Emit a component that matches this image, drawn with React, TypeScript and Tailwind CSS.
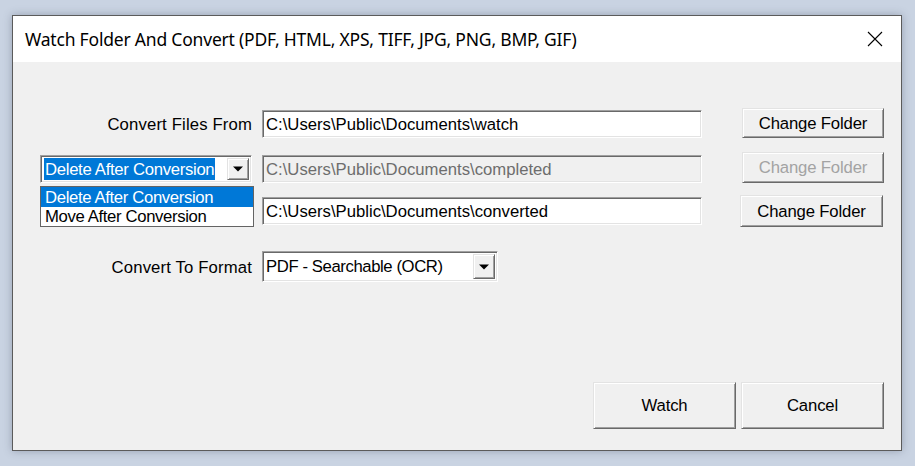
import React from "react";

const sunken =
  "border border-t-[#a0a0a0] border-l-[#a0a0a0] border-b-white border-r-white shadow-[inset_1px_1px_0_#696969,inset_-1px_-1px_0_#e3e3e3]";
const raised =
  "border border-t-[#e3e3e3] border-l-[#e3e3e3] border-b-[#696969] border-r-[#696969] shadow-[inset_1px_1px_0_#ffffff,inset_-1px_-1px_0_#a0a0a0] bg-[#f0f0f0]";

function Arrow() {
  return (
    <div className={`${raised} w-[22px] h-full flex items-center justify-center shrink-0`}>
      <svg width="10" height="6" viewBox="0 0 10 6">
        <path d="M0 0.5 L10 0.5 L5 5.5 Z" fill="#000" />
      </svg>
    </div>
  );
}

function TextBox({ value, disabled }: { value: string; disabled?: boolean }) {
  return (
    <div
      className={`${sunken} ml-[10px] w-[440px] h-[28px] flex items-center pl-[3px] pt-[3px] ${
        disabled ? "bg-[#f0f0f0] text-[#6d6d6d]" : "bg-white text-black"
      }`}
    >
      {value}
    </div>
  );
}

function Btn({ label, disabled, className = "" }: { label: string; disabled?: boolean; className?: string }) {
  return (
    <div
      className={`${raised} flex items-center justify-center pt-[2px] tracking-[-0.15px] ${
        disabled ? "text-[#a3a3a3]" : "text-black"
      } ${className}`}
    >
      {label}
    </div>
  );
}

export default function App() {
  return (
    <div
      className="w-[915px] h-[466px] bg-[#c9d3e2] pt-[15px] pl-[12px] overflow-hidden"
      style={{ fontFamily: '"Liberation Sans", Arial, sans-serif' }}
    >
      <div className="w-[890px] h-[436px] border border-[#5b5b5b] bg-[#f0f0f0] flex flex-col shadow-[0_0_8px_rgba(60,70,90,0.35)]">
        <div className="h-[46px] bg-white flex items-center justify-between pl-[12px] pr-[18px] shrink-0">
          <span
            className="text-[17.5px] text-black tracking-[-0.2px]"
            style={{ fontFamily: '"Noto Sans", "Open Sans", sans-serif' }}
          >
            Watch Folder And Convert (PDF, HTML, XPS, TIFF, JPG, PNG, BMP, GIF)
          </span>
          <svg width="16" height="16" viewBox="0 0 16 16">
            <path d="M1 1 L15 15 M15 1 L1 15" stroke="#000" strokeWidth="1.1" />
          </svg>
        </div>
        <div className="relative flex-1 text-[16.7px] leading-none">
          {/* Row 1 */}
          <div className="mt-[46px] h-[30px] flex items-end">
            <div className="w-[239px] h-[28px] flex items-center justify-end pt-[3px] tracking-[0.15px]">
              Convert Files From
            </div>
            <TextBox value="C:\Users\Public\Documents\watch" />
            <Btn label="Change Folder" className="ml-[40px] w-[142px] h-[30px]" />
          </div>
          {/* Row 2 */}
          <div className="mt-[14px] h-[31px] flex items-end">
            <div className="w-[239px] pl-[27px] h-[28px]">
              <div className={`${sunken} bg-white h-[28px] w-[212px] flex items-center pl-[3px] pr-[2px] py-[2px]`}>
                <div className="flex-1 h-full flex items-center">
                  <span className="bg-[#0078d7] text-white h-[22px] flex items-center pl-[1px] pr-[1px] pt-[2px] tracking-[-0.3px]">
                    Delete After Conversion
                  </span>
                </div>
                <Arrow />
              </div>
            </div>
            <TextBox value="C:\Users\Public\Documents\completed" disabled />
            <Btn label="Change Folder" disabled className="ml-[40px] w-[142px] h-[31px]" />
          </div>
          {/* Row 3 */}
          <div className="mt-[12px] h-[32px] flex items-center">
            <div className="w-[239px]" />
            <TextBox value="C:\Users\Public\Documents\converted" />
            <Btn label="Change Folder" className="ml-[38px] w-[143px] h-[32px]" />
          </div>
          {/* Row 4 */}
          <div className="mt-[24px] h-[31px] flex items-center">
            <div className="w-[239px] flex justify-end pt-[3px] tracking-[0.15px]">Convert To Format</div>
            <div className={`${sunken} bg-white ml-[10px] w-[236px] h-[31px] flex items-center pl-[3px] pr-[2px] py-[2px]`}>
              <div className="flex-1 pt-[2px] tracking-[-0.4px]">PDF - Searchable (OCR)</div>
              <Arrow />
            </div>
          </div>
          {/* Bottom buttons */}
          <div className="mt-[100px] h-[47px] flex justify-end pr-[17px] gap-[5px]">
            <Btn label="Watch" className="w-[143px] h-[47px]" />
            <Btn label="Cancel" className="w-[143px] h-[47px]" />
          </div>
          {/* Dropdown list overlay */}
          <div className="absolute left-[27px] top-[124px] w-[214px] h-[41px] bg-white border border-[#646464] flex flex-col tracking-[-0.35px]">
            <div className="h-[20px] bg-[#0078d7] text-white flex items-center pl-[4px] pt-[2px]">
              Delete After Conversion
            </div>
            <div className="h-[19px] text-black flex items-center pl-[4px] pt-[2px]">Move After Conversion</div>
          </div>
        </div>
      </div>
    </div>
  );
}
